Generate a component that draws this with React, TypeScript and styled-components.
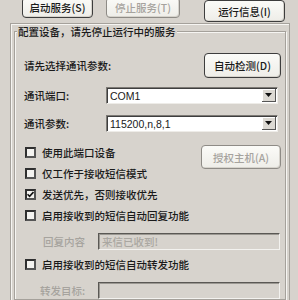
import React from "react";
import styled, { createGlobalStyle } from "styled-components";

const GlobalStyle = createGlobalStyle`
  html, body { margin: 0; padding: 0; background: #d7d3cd; }
  body {
    width: 298px; height: 300px; overflow: hidden;
    font-family: "Noto Sans CJK SC", "Liberation Sans", sans-serif;
    font-size: 10.5px; line-height: 13px; color: #1a1a1a; font-weight: 500;
  }
`;

const Page = styled.div`
  width: 298px;
  height: 300px;
  overflow: hidden;
  display: flex;
  flex-direction: column;
  background: #d7d3cd;
`;

const TopBar = styled.div`
  display: flex;
  align-items: flex-start;
  height: 29px;
  padding-left: 22px;
`;

const Button = styled.div<{ $w: number; $h: number; $top?: number; $left?: number; $disabled?: boolean }>`
  box-sizing: border-box;
  width: ${(p) => p.$w}px;
  height: ${(p) => p.$h}px;
  margin-top: ${(p) => p.$top ?? 0}px;
  margin-left: ${(p) => p.$left ?? 0}px;
  flex: none;
  display: flex;
  align-items: center;
  justify-content: center;
  border: 1px solid ${(p) => (p.$disabled ? "#8e8b86" : "#3d3d3d")};
  border-radius: 4px;
  background: linear-gradient(#fbfbf8, #eeede8);
  box-shadow: inset -1px -1px 0 #d6d3cc;
  color: ${(p) => (p.$disabled ? "#a6a39e" : "#1a1a1a")};
  white-space: nowrap;
`;

const Frame = styled.div`
  flex: 1;
  margin: 0 8px 0 10px;
  padding: 7px 3px 0 3px;
  border-top: 1px solid #a5a19b;
  border-left: 1px solid #a5a19b;
  border-right: 1px solid #a5a19b;
  box-shadow: inset 1px 1px 0 #f6f5f2;
  display: flex;
  flex-direction: column;
`;

const Group = styled.div`
  flex: 1;
  border: 1px solid #a5a19b;
  box-shadow: inset 1px 1px 0 #f6f5f2, 1px 1px 0 #f6f5f2;
  display: flex;
  flex-direction: column;
  padding: 0 4px 0 9px;
`;

const GroupLabel = styled.div`
  align-self: flex-start;
  margin: -7px 0 0 -7px;
  padding: 0 1px;
  background: #d7d3cd;
  white-space: nowrap;
`;

const Row = styled.div<{ $top: number; $h?: number }>`
  display: flex;
  align-items: center;
  margin-top: ${(p) => p.$top}px;
  ${(p) => (p.$h ? `height: ${p.$h}px;` : "")}
`;

const Label = styled.span<{ $w?: number; $left?: number; $disabled?: boolean }>`
  flex: none;
  ${(p) => (p.$w ? `width: ${p.$w}px;` : "")}
  margin-left: ${(p) => p.$left ?? 0}px;
  color: ${(p) => (p.$disabled ? "#a6a39e" : "#1a1a1a")};
  white-space: nowrap;
`;

const Spacer = styled.div`
  flex: 1;
`;

const Combo = styled.div`
  box-sizing: border-box;
  width: 172px;
  height: 17px;
  display: flex;
  align-items: stretch;
  background: #fff;
  border-top: 1px solid #7d7a75;
  border-left: 1px solid #7d7a75;
  border-right: 1px solid #eeece8;
  border-bottom: 1px solid #eeece8;
  box-shadow: inset 1px 1px 0 #3e3e3e;
`;

const ComboText = styled.span`
  flex: 1;
  padding: 1px 0 0 3px;
  font-family: "Liberation Sans", sans-serif;
  font-weight: 400;
  font-size: 10.5px;
  line-height: 14px;
  color: #1a1a1a;
`;

const ArrowBtn = styled.div`
  width: 13px;
  margin: 1px 1px 1px 0;
  background: #dcd9d3;
  border-right: 1px solid #555;
  border-bottom: 1px solid #555;
  box-shadow: inset 1px 1px 0 #fff;
  display: flex;
  align-items: center;
  justify-content: center;
`;

const CheckArea = styled.div<{ $top: number }>`
  display: grid;
  grid-template-columns: 1fr auto;
  margin-top: ${(p) => p.$top}px;
`;

const CheckRow = styled.div<{ $h?: number }>`
  grid-column: 1;
  display: flex;
  align-items: center;
  height: ${(p) => p.$h ?? 21}px;
  white-space: nowrap;
`;

const Box = styled.div`
  box-sizing: border-box;
  width: 11px;
  height: 11px;
  margin-left: 1px;
  margin-right: 6px;
  flex: none;
  border: 2px solid #2f2f2f;
  border-right-color: #555;
  border-bottom-color: #555;
  background: #f4f3f0;
  display: flex;
  align-items: center;
  justify-content: center;
`;

const SideButton = styled.div`
  grid-column: 2;
  grid-row: 1 / 3;
  align-self: start;
  margin-top: 3px;
`;

const TextBox = styled.div`
  box-sizing: border-box;
  width: 182px;
  height: 17px;
  border-top: 1px solid #5a5854;
  border-left: 1px solid #5a5854;
  border-right: 1px solid #f3f2ef;
  border-bottom: 1px solid #f3f2ef;
  box-shadow: inset 1px 1px 0 #9b9892;
  padding: 1px 0 0 3px;
  color: #aaa7a1;
  white-space: nowrap;
`;

const Check = ({ checked }: { checked?: boolean }) => (
  <Box>
    {checked && (
      <svg width="7" height="7" viewBox="0 0 7 7">
        <path d="M0.5 3.2 L2.6 5.4 L6.5 1" stroke="#111" strokeWidth="1.6" fill="none" />
      </svg>
    )}
  </Box>
);

const Arrow = () => (
  <ArrowBtn>
    <svg width="7" height="4" viewBox="0 0 7 4"><path d="M0 0 H7 L3.5 4 Z" fill="#111" /></svg>
  </ArrowBtn>
);

export default function App() {
  return (
    <>
      <GlobalStyle />
      <Page>
        <TopBar>
          <Button $w={71} $h={21} $top={-3}>启动服务(S)</Button>
          <Button $w={74} $h={21} $top={-3} $left={13} $disabled>停止服务(T)</Button>
          <Button $w={81} $h={22} $top={0} $left={24}>运行信息(I)</Button>
        </TopBar>
        <Frame>
          <Group>
            <GroupLabel>配置设备，请先停止运行中的服务</GroupLabel>
            <Row $top={15}>
              <Label>请先选择通讯参数:</Label>
              <Spacer />
              <Button $w={77} $h={25}>自动检测(D)</Button>
            </Row>
            <Row $top={9}>
              <Label $w={82}>通讯端口:</Label>
              <Combo>
                <ComboText>COM1</ComboText>
                <Arrow />
              </Combo>
            </Row>
            <Row $top={11}>
              <Label $w={82}>通讯参数:</Label>
              <Combo>
                <ComboText>115200,n,8,1</ComboText>
                <Arrow />
              </Combo>
            </Row>
            <CheckArea $top={10}>
              <CheckRow><Check />使用此端口设备</CheckRow>
              <SideButton>
                <Button $w={80} $h={24} $disabled>授权主机(A)</Button>
              </SideButton>
              <CheckRow $h={20}><Check />仅工作于接收短信模式</CheckRow>
              <CheckRow $h={22}><Check checked />发送优先，否则接收优先</CheckRow>
              <CheckRow><Check />启用接收到的短信自动回复功能</CheckRow>
            </CheckArea>
            <Row $top={7}>
              <Label $w={55} $left={19} $disabled>回复内容</Label>
              <TextBox>来信已收到!</TextBox>
            </Row>
            <CheckArea $top={4}>
              <CheckRow><Check />启用接收到的短信自动转发功能</CheckRow>
            </CheckArea>
            <Row $top={7}>
              <Label $w={58} $left={16} $disabled>转发目标:</Label>
              <TextBox />
            </Row>
          </Group>
        </Frame>
      </Page>
    </>
  );
}
